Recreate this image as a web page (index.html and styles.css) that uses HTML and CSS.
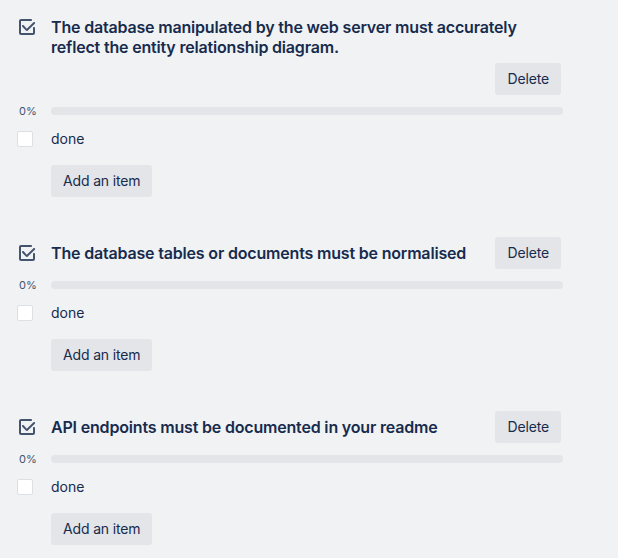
FILE: index.html
```html
<!DOCTYPE html>
<html lang="en">
<head>
<meta charset="utf-8">
<title>Checklists</title>
<link rel="stylesheet" href="styles.css">
</head>
<body>
<main class="checklists">
  <section class="checklist">
    <div class="cl-header">
      <div class="gutter icon-gutter">
        <svg class="cl-icon" viewBox="0 0 24 24" width="24" height="24" aria-hidden="true"><path d="M6 4C4.9 4 4 4.9 4 6V18C4 19.1 4.9 20 6 20H18C19.1 20 20 19.1 20 18V13C20 12.45 19.55 12 19 12C18.45 12 18 12.45 18 13V18H6V6H16C16.55 6 17 5.550 17 5C17 4.45 16.55 4 16 4H6ZM8.74 10.32C8.36 9.92 7.73 9.89 7.32 10.26C6.92 10.64 6.89 11.27 7.26 11.68L10.88 15.6C11.41 16.12 12.21 16.12 12.71 15.63L13.08 15.27L19.82 8.77C20.22 8.39 20.23 7.76 19.84 7.36C19.46 6.96 18.83 6.95 18.43 7.33L11.77 13.75L8.74 10.32Z"/></svg>
      </div>
      <div class="cl-head-main">
        <h3 class="cl-title">The database manipulated by the web server must accurately reflect the entity relationship diagram.</h3>
        <button class="btn btn-delete">Delete</button>
      </div>
    </div>
    <div class="cl-progress">
      <div class="gutter pct-gutter"><span class="pct">0%</span></div>
      <div class="bar"><div class="bar-fill" style="width:0%"></div></div>
    </div>
    <div class="cl-item">
      <div class="gutter box-gutter"><span class="checkbox"></span></div>
      <span class="item-text">done</span>
    </div>
    <button class="btn btn-add">Add an item</button>
  </section>

  <section class="checklist">
    <div class="cl-header">
      <div class="gutter icon-gutter">
        <svg class="cl-icon" viewBox="0 0 24 24" width="24" height="24" aria-hidden="true"><path d="M6 4C4.9 4 4 4.9 4 6V18C4 19.1 4.9 20 6 20H18C19.1 20 20 19.1 20 18V13C20 12.45 19.55 12 19 12C18.45 12 18 12.45 18 13V18H6V6H16C16.55 6 17 5.55 17 5C17 4.45 16.55 4 16 4H6ZM8.74 10.32C8.36 9.92 7.73 9.89 7.32 10.26C6.92 10.64 6.89 11.27 7.26 11.68L10.88 15.6C11.41 16.12 12.21 16.12 12.71 15.63L13.08 15.27L19.82 8.77C20.22 8.39 20.23 7.76 19.84 7.36C19.46 6.96 18.83 6.95 18.43 7.33L11.77 13.75L8.74 10.32Z"/></svg>
      </div>
      <div class="cl-head-main">
        <h3 class="cl-title">The database tables or documents must be normalised</h3>
        <button class="btn btn-delete">Delete</button>
      </div>
    </div>
    <div class="cl-progress">
      <div class="gutter pct-gutter"><span class="pct">0%</span></div>
      <div class="bar"><div class="bar-fill" style="width:0%"></div></div>
    </div>
    <div class="cl-item">
      <div class="gutter box-gutter"><span class="checkbox"></span></div>
      <span class="item-text">done</span>
    </div>
    <button class="btn btn-add">Add an item</button>
  </section>

  <section class="checklist">
    <div class="cl-header">
      <div class="gutter icon-gutter">
        <svg class="cl-icon" viewBox="0 0 24 24" width="24" height="24" aria-hidden="true"><path d="M6 4C4.9 4 4 4.9 4 6V18C4 19.1 4.9 20 6 20H18C19.1 20 20 19.1 20 18V13C20 12.45 19.55 12 19 12C18.45 12 18 12.45 18 13V18H6V6H16C16.55 6 17 5.55 17 5C17 4.45 16.55 4 16 4H6ZM8.74 10.32C8.36 9.92 7.73 9.89 7.32 10.26C6.92 10.64 6.89 11.27 7.26 11.68L10.88 15.6C11.41 16.12 12.21 16.12 12.71 15.63L13.08 15.27L19.82 8.77C20.22 8.39 20.23 7.76 19.84 7.36C19.46 6.96 18.83 6.95 18.43 7.33L11.77 13.75L8.74 10.32Z"/></svg>
      </div>
      <div class="cl-head-main">
        <h3 class="cl-title">API endpoints must be documented in your readme</h3>
        <button class="btn btn-delete">Delete</button>
      </div>
    </div>
    <div class="cl-progress">
      <div class="gutter pct-gutter"><span class="pct">0%</span></div>
      <div class="bar"><div class="bar-fill" style="width:0%"></div></div>
    </div>
    <div class="cl-item">
      <div class="gutter box-gutter"><span class="checkbox"></span></div>
      <span class="item-text">done</span>
    </div>
    <button class="btn btn-add">Add an item</button>
  </section>
</main>
</body>
</html>
```

FILE: styles.css
```css
html, body {
  margin: 0;
  padding: 0;
  background: #f1f2f4;
}

body {
  font-family: Inter, "Noto Sans", "Liberation Sans", sans-serif;
  color: #172b4d;
  font-size: 14px;
  line-height: 20px;
}

.checklists {
  padding-top: 11px;
  width: 563px;
}

.checklist {
  display: flex;
  flex-direction: column;
  margin-bottom: 40px;
}

.gutter {
  flex: 0 0 51px;
  width: 51px;
  box-sizing: border-box;
}

.cl-header {
  display: flex;
  align-items: flex-start;
}

.icon-gutter {
  padding-top: 4px;
  padding-left: 15px;
}

.cl-icon {
  display: block;
  fill: #44546f;
}

.cl-head-main {
  flex: 1 1 auto;
  display: flex;
  flex-wrap: wrap;
  align-items: center;
  min-width: 0;
}

.cl-title {
  margin: 6px 0;
  font-size: 16px;
  line-height: 20px;
  font-weight: 600;
  letter-spacing: -0.18px;
  color: #172b4d;
  flex: 0 1 auto;
}

.btn {
  font-family: inherit;
  font-size: 14px;
  line-height: 20px;
  letter-spacing: -0.15px;
  color: #172b4d;
  background: #e3e5e9;
  border: none;
  border-radius: 3px;
  padding: 6px 12px;
  height: 32px;
  cursor: pointer;
}

.btn-delete {
  margin-left: auto;
  margin-right: 2px;
}

.cl-progress {
  display: flex;
  align-items: center;
  height: 8px;
  margin-top: 12px;
}

.pct-gutter {
  padding-left: 19px;
  display: flex;
  align-items: center;
}

.pct {
  font-size: 11px;
  line-height: 12px;
  color: #44546f;
}

.bar {
  flex: 1 1 auto;
  height: 8px;
  border-radius: 4px;
  background: #e3e5e9;
  overflow: hidden;
}

.bar-fill {
  height: 100%;
  background: #22a06b;
}

.cl-item {
  display: flex;
  align-items: center;
  padding: 6px 0;
  margin-top: 8px;
}

.box-gutter {
  padding-left: 17px;
  display: flex;
  align-items: center;
}

.checkbox {
  display: block;
  width: 16px;
  height: 16px;
  box-sizing: border-box;
  background: #ffffff;
  border: 1px solid #dcdfe4;
  border-radius: 2px;
}

.item-text {
  font-size: 14px;
  line-height: 20px;
}

.btn-add {
  align-self: flex-start;
  margin-left: 51px;
  margin-top: 10px;
}
```
